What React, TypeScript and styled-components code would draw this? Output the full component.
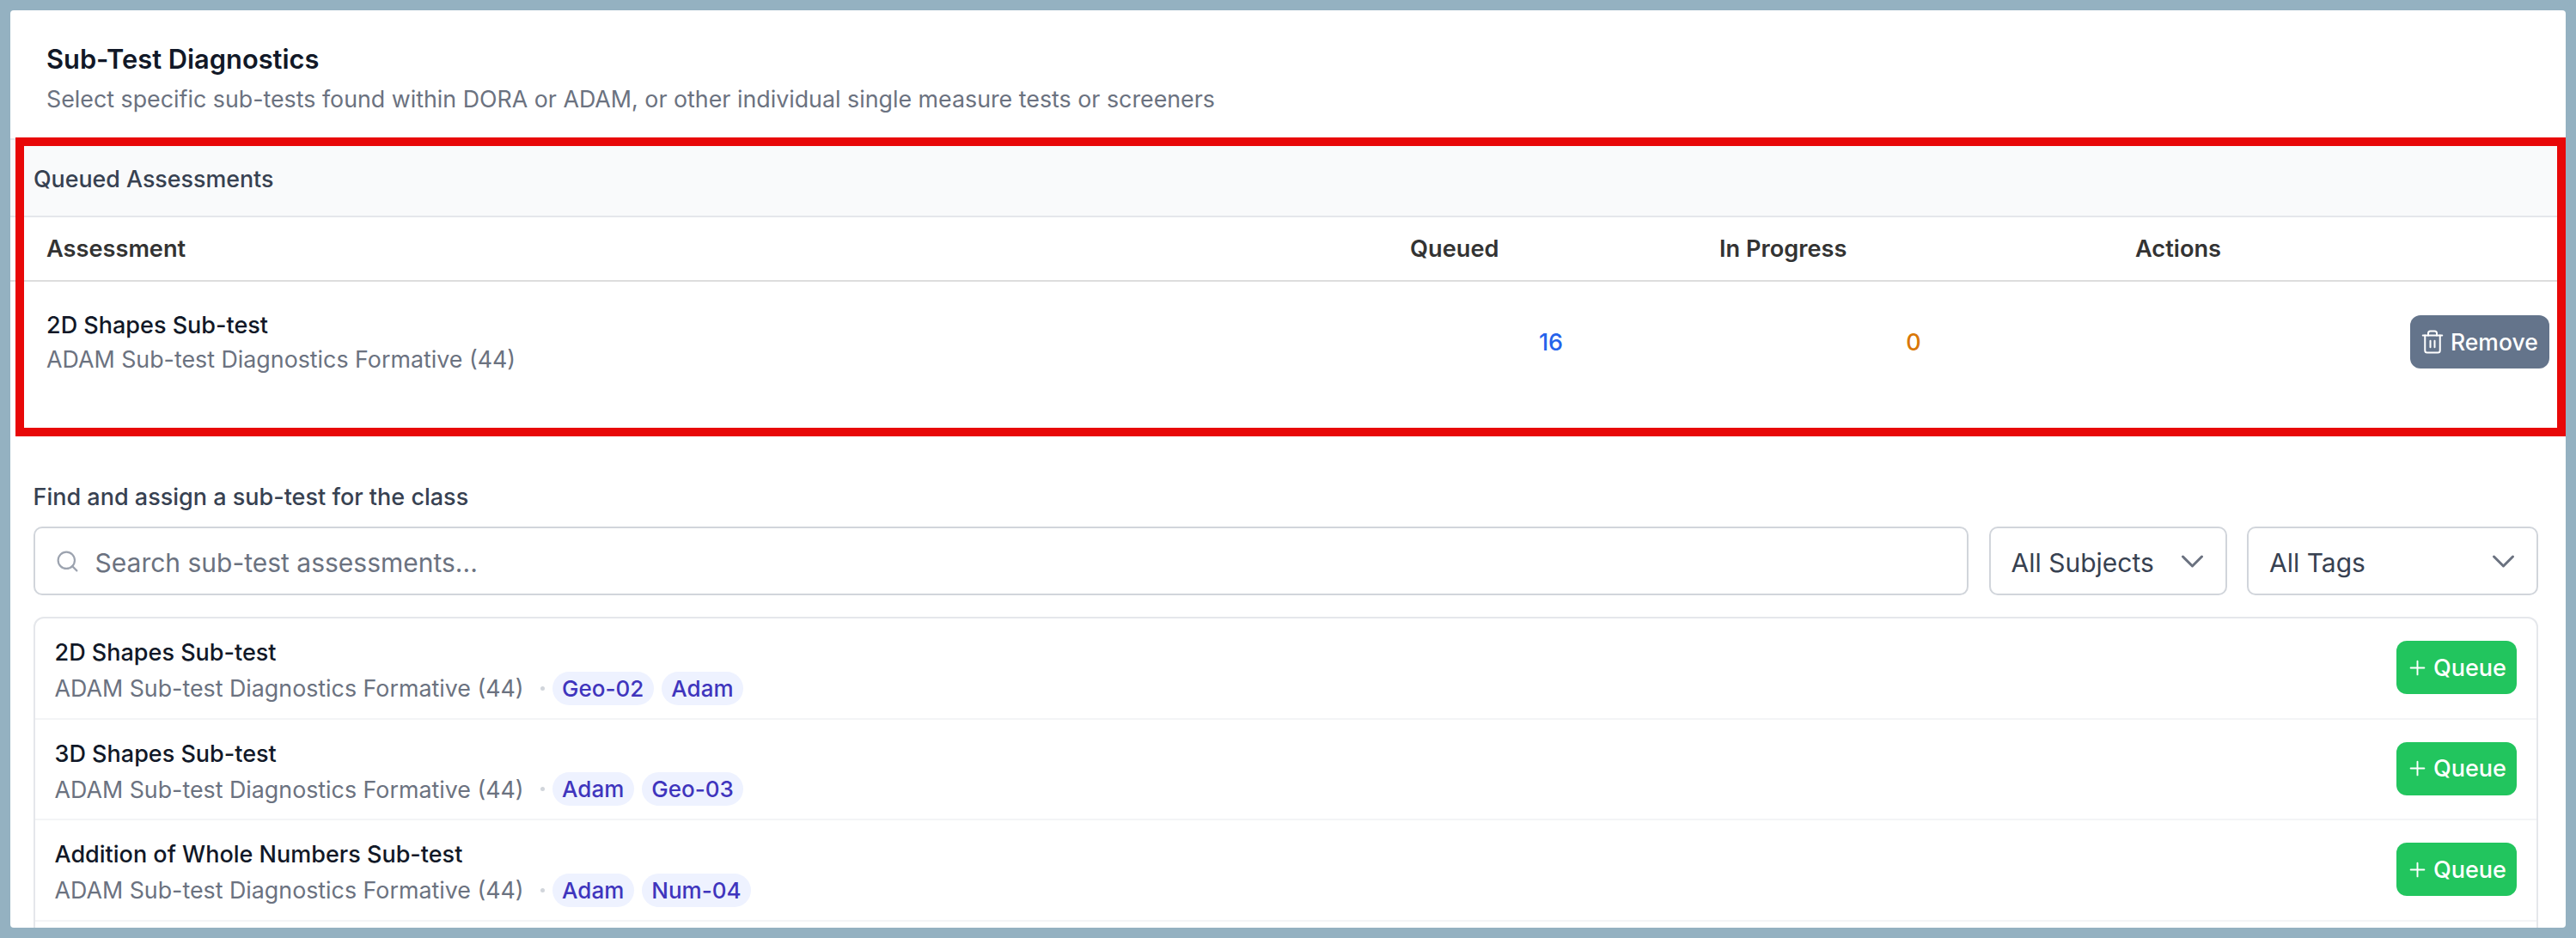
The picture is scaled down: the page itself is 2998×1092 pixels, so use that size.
import { createGlobalStyle, styled } from "styled-components";
import { Plus, Search, Trash2 } from "lucide-react";

const GlobalStyle = createGlobalStyle`
  html, body {
    margin: 0;
    padding: 0;
    background: #94b1c1;
  }
  * {
    box-sizing: border-box;
  }
  body {
    font-family: Inter, "Liberation Sans", sans-serif;
  }
`;

const subTests = [
  { name: "2D Shapes Sub-test", tags: ["Geo-02", "Adam"] },
  { name: "3D Shapes Sub-test", tags: ["Adam", "Geo-03"] },
  { name: "Addition of Whole Numbers Sub-test", tags: ["Adam", "Num-04"] },
];

const App = () => {
  return (
    <Frame>
      <GlobalStyle />
      <Panel>
        <Header>
          <Title>Sub-Test Diagnostics</Title>
          <Subtitle>Select specific sub-tests found within DORA or ADAM, or other individual single measure tests or screeners</Subtitle>
        </Header>

        <QueueSection>
          <SectionBar>Queued Assessments</SectionBar>
          <QueueRow $head>
            <HeadCell>Assessment</HeadCell>
            <HeadCell>Queued</HeadCell>
            <HeadCell>In Progress</HeadCell>
            <HeadCell>Actions</HeadCell>
          </QueueRow>
          <QueueRow>
            <AssessmentCell>
              <Name>2D Shapes Sub-test</Name>
              <QueueMeta>ADAM Sub-test Diagnostics Formative (44)</QueueMeta>
            </AssessmentCell>
            <Count $color="#2563eb">16</Count>
            <Count $color="#d97706">0</Count>
            <ActionCell>
              <RemoveButton>
                <Trash2 size={30} strokeWidth={1.6} />
                Remove
              </RemoveButton>
            </ActionCell>
          </QueueRow>
          <Highlight />
        </QueueSection>

        <FindSection>
          <FindLabel>Find and assign a sub-test for the class</FindLabel>
          <Filters>
            <SearchBox>
              <Search size={29} color="#9ca3af" strokeWidth={1.8} />
              <SearchInput placeholder="Search sub-test assessments..." />
            </SearchBox>
            <Select $width={277}>
              <SelectText>All Subjects</SelectText>
              <SelectArrow />
            </Select>
            <Select $width={339}>
              <SelectText>All Tags</SelectText>
              <SelectArrow />
            </Select>
          </Filters>

          <List>
            {subTests.map((test) => (
              <ListRow key={test.name}>
                <RowInfo>
                  <Name>{test.name}</Name>
                  <MetaLine>
                    <Meta>ADAM Sub-test Diagnostics Formative (44)</Meta>
                    <Dot />
                    <Tags>
                      {test.tags.map((tag) => (
                        <Tag key={tag}>{tag}</Tag>
                      ))}
                    </Tags>
                  </MetaLine>
                </RowInfo>
                <QueueButton>
                  <Plus size={27} strokeWidth={1.7} />
                  Queue
                </QueueButton>
              </ListRow>
            ))}
          </List>
        </FindSection>
      </Panel>
    </Frame>
  );
};

export default App;

const SelectArrow = () => (
  <ArrowIcon viewBox="0 0 20 20" fill="none">
    <path d="M6 8l4 4 4-4" stroke="#6b7280" strokeWidth="1.1" strokeLinecap="round" strokeLinejoin="round" />
  </ArrowIcon>
);

const Frame = styled.div`
  width: 2998px;
  height: 1092px;
  padding: 12px;
  overflow: hidden;
`;

const Panel = styled.div`
  height: 1068px;
  background: #ffffff;
  border-radius: 4px;
  overflow: hidden;
`;

const Header = styled.div`
  height: 149px;
  padding: 38px 0 0 42px;
  display: flex;
  flex-direction: column;
  gap: 8px;
`;

const Title = styled.div`
  font-size: 30.8px;
  line-height: 38px;
  font-weight: 600;
  color: #111827;
`;

const Subtitle = styled.div`
  font-size: 26.8px;
  line-height: 38px;
  color: #6b7280;
`;

const QueueSection = styled.section`
  position: relative;
  height: 347px;
  border-top: 2px solid #e5e7eb;
`;

const SectionBar = styled.div`
  height: 90px;
  padding: 2px 0 0 27px;
  display: flex;
  align-items: center;
  background: #f9fafb;
  border-bottom: 2px solid #e5e7eb;
  font-size: 26.8px;
  font-weight: 500;
  color: #374151;
`;

const QueueRow = styled.div<{ $head?: boolean }>`
  display: grid;
  grid-template-columns: 1613px 360px 484px 1fr;
  align-items: center;
  height: ${(p) => (p.$head ? "75px" : "140px")};
  border-bottom: ${(p) => (p.$head ? "2px solid #dddddd" : "none")};
  padding-right: 19px;
`;

const HeadCell = styled.div`
  padding-left: 16px;
  font-size: 27.2px;
  font-weight: 600;
  color: #333333;

  &:first-child {
    padding-left: 42px;
  }
`;

const AssessmentCell = styled.div`
  padding: 4px 0 0 42px;
`;

const Name = styled.div`
  font-size: 27px;
  line-height: 34px;
  font-weight: 500;
  color: #111827;
`;

const Meta = styled.div`
  font-size: 26.8px;
  line-height: 40px;
  color: #6b7280;
`;

const QueueMeta = styled(Meta)`
  margin-top: 2px;
`;

const Count = styled.div<{ $color: string }>`
  text-align: center;
  font-size: 27px;
  font-weight: 500;
  color: ${(p) => p.$color};
`;

const ActionCell = styled.div`
  display: flex;
  justify-content: flex-end;
`;

const RemoveButton = styled.button`
  display: flex;
  align-items: center;
  gap: 6px;
  height: 62px;
  width: 162px;
  padding: 0 0 0 11px;
  border: none;
  border-radius: 12px;
  background: #64748b;
  color: #ffffff;
  font-family: inherit;
  font-size: 26.5px;
  font-weight: 500;
`;

// red annotation drawn on top of the screenshot
const Highlight = styled.div`
  position: absolute;
  top: -3px;
  left: 6px;
  right: 0;
  bottom: 0;
  border: 10px solid #e80808;
  pointer-events: none;
`;

const FindSection = styled.section`
  padding: 53px 32px 0 26.5px;
`;

const FindLabel = styled.div`
  font-size: 27px;
  line-height: 36px;
  font-weight: 500;
  color: #374151;
`;

const Filters = styled.div`
  display: flex;
  gap: 23.5px;
  margin-top: 16px;
`;

const SearchBox = styled.div`
  flex: 1;
  height: 80px;
  display: flex;
  align-items: center;
  gap: 18px;
  padding: 0 0 0 23px;
  border: 2px solid #d1d5db;
  border-radius: 10px;
  background: #ffffff;
`;

const SearchInput = styled.input`
  flex: 1;
  border: none;
  outline: none;
  padding: 3px 0 0;
  background: transparent;
  font-family: inherit;
  font-size: 30px;
  color: #374151;

  &::placeholder {
    color: #6b7280;
    opacity: 1;
  }
`;

const Select = styled.div<{ $width: number }>`
  width: ${(p) => p.$width}px;
  height: 80px;
  display: flex;
  align-items: center;
  justify-content: space-between;
  padding: 0 11px 0 24px;
  border: 2px solid #d1d5db;
  border-radius: 10px;
  background: #ffffff;
  font-size: 30px;
  color: #374151;
`;

const SelectText = styled.span`
  padding-top: 3px;
`;

const ArrowIcon = styled.svg`
  width: 55px;
  height: 55px;
  flex: none;
`;

const List = styled.div`
  margin-top: 25px;
  min-height: 400px;
  border: 2px solid #e5e7eb;
  border-radius: 12px;
`;

const ListRow = styled.div`
  height: 117.5px;
  display: flex;
  align-items: center;
  justify-content: space-between;
  padding: 0 23px 0 23px;
  border-bottom: 2px solid #f3f4f6;
`;

const RowInfo = styled.div`
  padding-top: 9px;
`;

const MetaLine = styled.div`
  display: flex;
  align-items: center;
  margin-top: 4px;
`;

const Dot = styled.span`
  width: 5px;
  height: 5px;
  margin: 0 9px 0 19px;
  border-radius: 50%;
  background: #d1d5db;
`;

const Tags = styled.div`
  display: flex;
  gap: 9px;
`;

const Tag = styled.span`
  height: 39px;
  padding: 0 11.5px;
  display: flex;
  align-items: center;
  border-radius: 20px;
  background: #eef2ff;
  color: #3f35bd;
  font-size: 26px;
  font-weight: 500;
`;

const QueueButton = styled.button`
  display: flex;
  align-items: center;
  gap: 5px;
  width: 140px;
  height: 62px;
  margin-top: -1px;
  padding: 0 0 0 11px;
  border: none;
  border-radius: 12px;
  background: #22c55e;
  color: #ffffff;
  font-family: inherit;
  font-size: 27px;
  font-weight: 500;
`;
